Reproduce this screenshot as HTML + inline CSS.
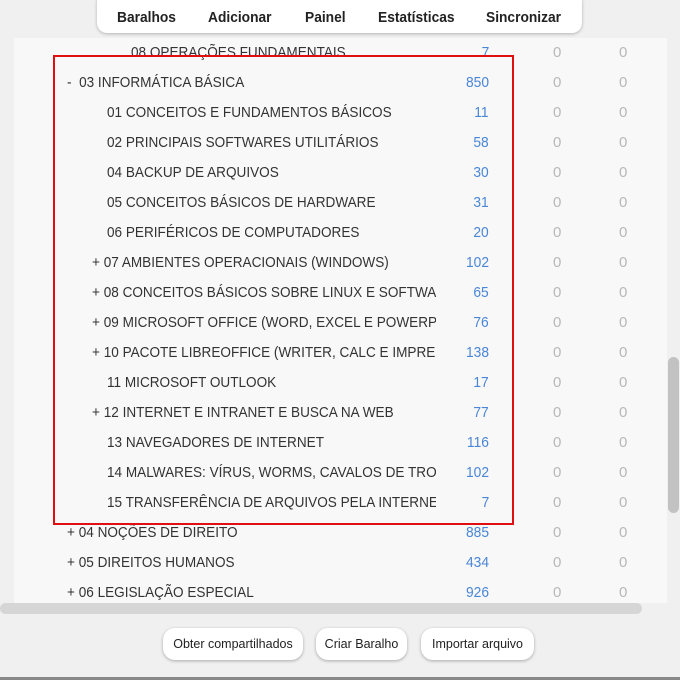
<!DOCTYPE html>
<html><head><meta charset="utf-8"><style>
html,body{margin:0;padding:0}
body{width:680px;height:680px;background:#f0f0f0;position:relative;overflow:hidden;font-family:"Liberation Sans",sans-serif;color:#333}
.content{position:absolute;left:14px;top:38px;width:653px;height:565px;background:#f8f8f8}
.row{position:absolute;left:0;width:680px;height:30px;font-size:15px;line-height:30px}
.lab{position:absolute;top:0;overflow:hidden;white-space:nowrap;height:30px}
.lab span{display:inline-block;transform:scaleX(0.905);transform-origin:left center}
.n{position:absolute;right:191px;color:#4a86d6;transform:scaleX(0.92);transform-origin:right center}
.z1{position:absolute;left:553px;color:#b8b8b8}
.z2{position:absolute;left:619px;color:#b8b8b8}
.nav{position:absolute;left:97px;top:-8px;width:485px;height:41px;background:#fff;border-radius:10px;box-shadow:0 1px 3px rgba(0,0,0,.25)}
.nav span{position:absolute;top:18px;font-size:14.5px;font-weight:bold;color:#222;transform:scaleX(0.95);transform-origin:left}
.red{position:absolute;left:53px;top:55px;width:457px;height:466px;border:2px solid #e01010}
.vs{position:absolute;left:668px;top:357px;width:11px;height:156px;background:#c2c2c2;border-radius:6px}
.hs{position:absolute;left:0;top:603px;width:642px;height:11px;background:#d6d6d6;border-radius:6px}
.btn{position:absolute;top:628px;height:32px;background:#fff;border-radius:12px;box-shadow:0 1px 3px rgba(0,0,0,.3);font-size:12.5px;line-height:32px;text-align:center;color:#222}
.bottom{position:absolute;left:0;top:677px;width:680px;height:3px;background:#888}
</style></head><body>
<div class="content"></div>
<div class="row" style="top:38px"><div class="lab" style="left:131px;width:305px"><span>08 OPERAÇÕES FUNDAMENTAIS</span></div><span class="n">7</span><span class="z1">0</span><span class="z2">0</span></div>
<div class="row" style="top:68px"><div class="lab" style="left:67px;width:370px"><span>-&nbsp; 03 INFORMÁTICA BÁSICA</span></div><span class="n">850</span><span class="z1">0</span><span class="z2">0</span></div>
<div class="row" style="top:98px"><div class="lab" style="left:107px;width:329px"><span>01 CONCEITOS E FUNDAMENTOS BÁSICOS</span></div><span class="n">11</span><span class="z1">0</span><span class="z2">0</span></div>
<div class="row" style="top:128px"><div class="lab" style="left:107px;width:329px"><span>02 PRINCIPAIS SOFTWARES UTILITÁRIOS</span></div><span class="n">58</span><span class="z1">0</span><span class="z2">0</span></div>
<div class="row" style="top:158px"><div class="lab" style="left:107px;width:329px"><span>04 BACKUP DE ARQUIVOS</span></div><span class="n">30</span><span class="z1">0</span><span class="z2">0</span></div>
<div class="row" style="top:188px"><div class="lab" style="left:107px;width:329px"><span>05 CONCEITOS BÁSICOS DE HARDWARE</span></div><span class="n">31</span><span class="z1">0</span><span class="z2">0</span></div>
<div class="row" style="top:218px"><div class="lab" style="left:107px;width:329px"><span>06 PERIFÉRICOS DE COMPUTADORES</span></div><span class="n">20</span><span class="z1">0</span><span class="z2">0</span></div>
<div class="row" style="top:248px"><div class="lab" style="left:92px;width:344px"><span>+ 07 AMBIENTES OPERACIONAIS (WINDOWS)</span></div><span class="n">102</span><span class="z1">0</span><span class="z2">0</span></div>
<div class="row" style="top:278px"><div class="lab" style="left:92px;width:344px"><span>+ 08 CONCEITOS BÁSICOS SOBRE LINUX E SOFTWARE LIVRE</span></div><span class="n">65</span><span class="z1">0</span><span class="z2">0</span></div>
<div class="row" style="top:308px"><div class="lab" style="left:92px;width:344px"><span>+ 09 MICROSOFT OFFICE (WORD, EXCEL E POWERPOINT)</span></div><span class="n">76</span><span class="z1">0</span><span class="z2">0</span></div>
<div class="row" style="top:338px"><div class="lab" style="left:92px;width:344px"><span>+ 10 PACOTE LIBREOFFICE (WRITER, CALC E IMPRESS)</span></div><span class="n">138</span><span class="z1">0</span><span class="z2">0</span></div>
<div class="row" style="top:368px"><div class="lab" style="left:107px;width:329px"><span>11 MICROSOFT OUTLOOK</span></div><span class="n">17</span><span class="z1">0</span><span class="z2">0</span></div>
<div class="row" style="top:398px"><div class="lab" style="left:92px;width:344px"><span>+ 12 INTERNET E INTRANET E BUSCA NA WEB</span></div><span class="n">77</span><span class="z1">0</span><span class="z2">0</span></div>
<div class="row" style="top:428px"><div class="lab" style="left:107px;width:329px"><span>13 NAVEGADORES DE INTERNET</span></div><span class="n">116</span><span class="z1">0</span><span class="z2">0</span></div>
<div class="row" style="top:458px"><div class="lab" style="left:107px;width:329px"><span>14 MALWARES: VÍRUS, WORMS, CAVALOS DE TROIA</span></div><span class="n">102</span><span class="z1">0</span><span class="z2">0</span></div>
<div class="row" style="top:488px"><div class="lab" style="left:107px;width:329px"><span>15 TRANSFERÊNCIA DE ARQUIVOS PELA INTERNET</span></div><span class="n">7</span><span class="z1">0</span><span class="z2">0</span></div>
<div class="row" style="top:518px"><div class="lab" style="left:67px;width:370px"><span>+ 04 NOÇÕES DE DIREITO</span></div><span class="n">885</span><span class="z1">0</span><span class="z2">0</span></div>
<div class="row" style="top:548px"><div class="lab" style="left:67px;width:370px"><span>+ 05 DIREITOS HUMANOS</span></div><span class="n">434</span><span class="z1">0</span><span class="z2">0</span></div>
<div class="row" style="top:578px;height:25px;overflow:hidden"><div class="lab" style="left:67px;width:370px"><span>+ 06 LEGISLAÇÃO ESPECIAL</span></div><span class="n">926</span><span class="z1">0</span><span class="z2">0</span></div>
<div class="red"></div>
<div class="nav">
<span style="left:20px">Baralhos</span>
<span style="left:111px">Adicionar</span>
<span style="left:208px">Painel</span>
<span style="left:281px">Estatísticas</span>
<span style="left:389px">Sincronizar</span>
</div>
<div class="vs"></div>
<div class="hs"></div>
<div class="btn" style="left:163px;width:140px">Obter compartilhados</div>
<div class="btn" style="left:316px;width:91px">Criar Baralho</div>
<div class="btn" style="left:421px;width:113px">Importar arquivo</div>
<div class="bottom"></div>
</body></html>
